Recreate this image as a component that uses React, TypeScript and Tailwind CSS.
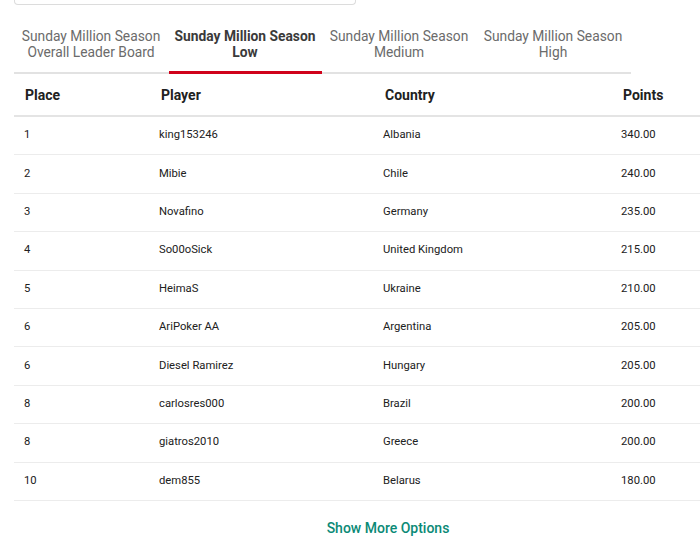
import React from 'react';

const tabs = [
  { l1: 'Sunday Million Season', l2: 'Overall Leader Board', active: false },
  { l1: 'Sunday Million Season', l2: 'Low', active: true },
  { l1: 'Sunday Million Season', l2: 'Medium', active: false },
  { l1: 'Sunday Million Season', l2: 'High', active: false },
];

const rows = [
  ['1', 'king153246', 'Albania', '340.00'],
  ['2', 'Mibie', 'Chile', '240.00'],
  ['3', 'Novafino', 'Germany', '235.00'],
  ['4', 'So00oSick', 'United Kingdom', '215.00'],
  ['5', 'HeimaS', 'Ukraine', '210.00'],
  ['6', 'AriPoker AA', 'Argentina', '205.00'],
  ['6', 'Diesel Ramirez', 'Hungary', '205.00'],
  ['8', 'carlosres000', 'Brazil', '200.00'],
  ['8', 'giatros2010', 'Greece', '200.00'],
  ['10', 'dem855', 'Belarus', '180.00'],
];

const cols = 'grid grid-cols-[135px_225px_238px_1fr]';

export default function App() {
  return (
    <div className="w-[700px] h-[541px] overflow-hidden bg-white font-['Roboto',sans-serif] text-[#212121]">
      <div className="w-[748px] ml-[14px]">
        {/* select box cut off at top */}
        <div className="w-[342px] h-[6px] -mt-[1px] border border-t-0 border-[#dcdcdc] rounded-b-[4px]" />

        {/* TABS */}
        <div className="w-[617px] mt-[23px] flex border-b-2 border-[#e2e2e2]">
          {tabs.map((t, i) => (
            <div
              key={i}
              className={`relative w-[154px] h-[44px] pt-[1px] text-center text-[13.8px] leading-[15.5px] ${
                t.active ? 'font-bold text-[#3a3a3a]' : 'text-[#6b6b6b]'
              }`}
            >
              <div>{t.l1}</div>
              <div>{t.l2}</div>
              {t.active && <div className="absolute left-[1px] right-0 -bottom-[2px] h-[3px] bg-[#d0021b]" />}
            </div>
          ))}
        </div>

        {/* TABLE */}
        <div className={`${cols} h-[43px] pt-[1px] items-center border-b-2 border-[#e4e4e4] text-[14px] font-bold`}>
          <div className="pl-[11px]">Place</div>
          <div className="pl-[12px]">Player</div>
          <div className="pl-[11px]">Country</div>
          <div className="pl-[11px]">Points</div>
        </div>
        {rows.map((r, i) => (
          <div key={i} className={`${cols} h-[38.4px] items-center border-b border-[#ececec] text-[11.25px]`}>
            <div className="pl-[10px]">{r[0]}</div>
            <div className="pl-[10px]">{r[1]}</div>
            <div className="pl-[9px]">{r[2]}</div>
            <div className="pl-[9px]">{r[3]}</div>
          </div>
        ))}

        <div className="h-[56px] flex items-center justify-center">
          <span className="text-[14px] font-medium text-[#0b8a76]">Show More Options</span>
        </div>
      </div>
    </div>
  );
}
